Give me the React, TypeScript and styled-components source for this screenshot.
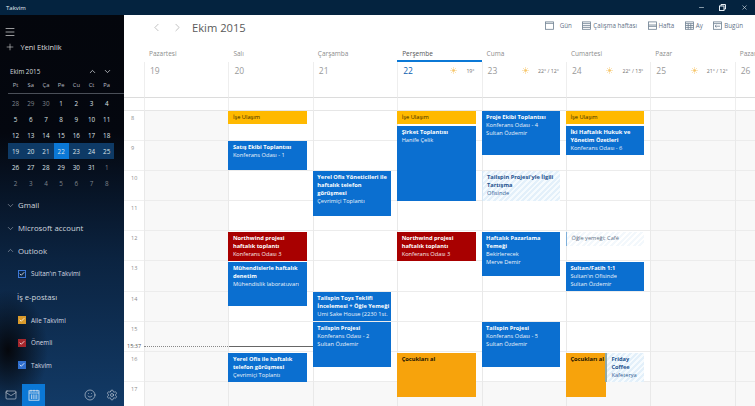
import React from "react";
import styled, { createGlobalStyle } from "styled-components";
import {
  Check,
  ChevronDown,
  ChevronLeft,
  ChevronRight,
  ChevronUp,
  Mail,
  Menu,
  Minus,
  Plus,
  Settings,
  Smile,
  Sun,
  X,
} from "lucide-react";

const HOUR = 30.2;
const DAY_START = 8;
const NOW_TOP = 235.5;

type Tone = "blue" | "red" | "yellow" | "orange" | "hatch" | "line";
type ToolKind = "day" | "work" | "week" | "month" | "today";

interface CalEvent {
  title: string;
  lines?: string[];
  start: number;
  hours: number;
  tone: Tone;
  half?: "left" | "right";
}

interface Day {
  name: string;
  num: string;
  weather?: string;
  today?: boolean;
  off?: boolean;
  narrow?: boolean;
  events: CalEvent[];
}

const days: Day[] = [
  { name: "Pazartesi", num: "19", off: true, events: [] },
  {
    name: "Salı",
    num: "20",
    events: [
      { title: "İşe Ulaşım", start: 8, hours: 0.48, tone: "yellow" },
      { title: "Satış Ekibi Toplantısı", lines: ["Konferans Odası - 1"], start: 9, hours: 1, tone: "blue" },
      { title: "Northwind projesi haftalık toplantı", lines: ["Konferans Odası 3"], start: 12, hours: 1, tone: "red" },
      { title: "Mühendislerle haftalık denetim", lines: ["Mühendislik laboratuvarı"], start: 13, hours: 1.5, tone: "blue" },
      { title: "Yerel Ofis ile haftalık telefon görüşmesi", lines: ["Çevrimiçi Toplantı"], start: 16, hours: 1, tone: "blue" },
    ],
  },
  {
    name: "Çarşamba",
    num: "21",
    events: [
      { title: "Yerel Ofis Yöneticileri ile haftalık telefon görüşmesi", lines: ["Çevrimiçi Toplantı"], start: 10, hours: 1.5, tone: "blue" },
      { title: "Tailspin Toys Teklifi İncelemesi + Öğle Yemeği", lines: ["Umi Sake House (2230 1st."], start: 14, hours: 1, tone: "blue" },
      { title: "Tailspin Projesi", lines: ["Konferans Odası - 2", "Sultan Özdemir"], start: 15, hours: 1.5, tone: "blue" },
    ],
  },
  {
    name: "Perşembe",
    num: "22",
    weather: "19°",
    today: true,
    events: [
      { title: "İşe Ulaşım", start: 8, hours: 0.48, tone: "yellow" },
      { title: "Şirket Toplantısı", lines: ["Hanife Çelik"], start: 8.5, hours: 2.5, tone: "blue" },
      { title: "Northwind projesi haftalık toplantı", lines: ["Konferans Odası 3"], start: 12, hours: 1, tone: "red" },
      { title: "Çocukları al", start: 16, hours: 1.5, tone: "orange" },
    ],
  },
  {
    name: "Cuma",
    num: "23",
    weather: "22° / 12°",
    events: [
      { title: "Proje Ekibi Toplantısı", lines: ["Konferans Odası - 4", "Sultan Özdemir"], start: 8, hours: 1.5, tone: "blue" },
      { title: "Tailspin Projesi'yle İlgili Tartışma", lines: ["Ofisinde"], start: 10, hours: 1, tone: "hatch" },
      { title: "Haftalık Pazarlama Yemeği", lines: ["Bekirlerecek", "Merve Demir"], start: 12, hours: 1.5, tone: "blue" },
      { title: "Tailspin Projesi", lines: ["Konferans Odası - 5", "Sultan Özdemir"], start: 15, hours: 1.5, tone: "blue" },
    ],
  },
  {
    name: "Cumartesi",
    num: "24",
    weather: "22° / 13°",
    events: [
      { title: "İşe Ulaşım", start: 8, hours: 0.48, tone: "yellow" },
      { title: "İki Haftalık Hukuk ve Yönetim Özetleri", lines: ["Konferans Odası - 6"], start: 8.5, hours: 1, tone: "blue" },
      { title: "Öğle yemeği; Café", start: 12, hours: 0.5, tone: "line" },
      { title: "Sultan/Fatih 1:1", lines: ["Sultan'ın Ofisinde", "Sultan Özdemir"], start: 13, hours: 1, tone: "blue" },
      { title: "Çocukları al", start: 16, hours: 1.5, tone: "orange", half: "left" },
      { title: "Friday Coffee", lines: ["Kafeterya"], start: 16, hours: 1, tone: "hatch", half: "right" },
    ],
  },
  { name: "Pazar", num: "25", weather: "21° / 12°", off: true, events: [] },
  { name: "Pazartesi", num: "26", off: true, narrow: true, events: [] },
];

const hours = [8, 9, 10, 11, 12, 13, 14, 15, 16, 17];

const miniWeeks = [
  ["28", "29", "30", "1", "2", "3", "4"],
  ["5", "6", "7", "8", "9", "10", "11"],
  ["12", "13", "14", "15", "16", "17", "18"],
  ["19", "20", "21", "22", "23", "24", "25"],
  ["26", "27", "28", "29", "30", "31", "1"],
  ["2", "3", "4", "5", "6", "7", "8"],
];

const miniHead = ["Pt", "Sa", "Ça", "Pe", "Cu", "Ct", "Pa"];

const tools: { kind: ToolKind; label: string }[] = [
  { kind: "day", label: "Gün" },
  { kind: "work", label: "Çalışma haftası" },
  { kind: "week", label: "Hafta" },
  { kind: "month", label: "Ay" },
  { kind: "today", label: "Bugün" },
];

const GlobalStyle = createGlobalStyle`
  html, body {
    margin: 0;
    padding: 0;
    height: 406px;
    overflow: hidden;
    background: #fff;
    font-family: "Open Sans", "Noto Sans", sans-serif;
  }
  * { box-sizing: border-box; }
`;

const Window = styled.div`
  width: 755px;
  height: 406px;
  display: flex;
  flex-direction: column;
  overflow: hidden;
`;

const TitleBar = styled.div`
  height: 15px;
  flex: none;
  display: flex;
  align-items: center;
  justify-content: space-between;
  background: #04233f;
  color: #e6edf3;
  font-size: 6px;
  padding: 0 7.5px 0 6px;
`;

const WinButtons = styled.div`
  display: flex;
  gap: 14.5px;
  align-items: center;
`;

const Body = styled.div`
  flex: 1;
  display: flex;
  min-height: 0;
`;

const Sidebar = styled.aside`
  width: 124px;
  flex: none;
  display: flex;
  flex-direction: column;
  color: #fff;
  background:
    radial-gradient(ellipse 40px 60px at 8px 335px, #05070c 0%, rgba(5, 7, 12, 0) 100%),
    linear-gradient(180deg, #04060c 0%, #04070f 30%, #0b2340 62%, #123a66 100%);
`;

const Burger = styled.div`
  height: 22px;
  padding: 6px 0 0 4px;
`;

const NewEvent = styled.div`
  display: flex;
  align-items: center;
  gap: 6px;
  height: 20px;
  padding-left: 4.5px;
  font-size: 7.4px;
  color: #dedede;
`;

const MiniTop = styled.div`
  display: flex;
  align-items: center;
  justify-content: space-between;
  margin-top: 6px;
  padding: 0 12.5px 0 10px;
  height: 16px;
  font-size: 6.3px;
  color: #d3d7dc;
`;

const MiniArrows = styled.div`
  display: flex;
  gap: 6px;
`;

const MiniHead = styled.div`
  display: grid;
  grid-template-columns: repeat(7, 15.2px);
  margin: 0 0 0 8px;
  padding-bottom: 2px;
  height: 15px;
  align-items: center;
  border-bottom: 1px solid #4a4f58;
  font-size: 5.8px;
  color: #b9bdc3;
  text-align: center;
`;

const MiniGrid = styled.div`
  display: grid;
  grid-template-columns: repeat(7, 15.2px);
  grid-auto-rows: 16px;
  margin-left: 8px;
  margin-top: 1px;
  font-size: 6.3px;
  text-align: center;
`;

const MiniCell = styled.div<{ $dim?: boolean; $week?: boolean; $today?: boolean }>`
  display: flex;
  align-items: center;
  justify-content: center;
  color: ${(p) => (p.$dim ? "#7f848c" : "#dfe2e6")};
  background: ${(p) => (p.$today ? "#0b78d6" : p.$week ? "#0e3a66" : "transparent")};
`;

const Section = styled.div<{ $top?: number }>`
  display: flex;
  align-items: center;
  gap: 3px;
  height: 22.8px;
  padding-left: 6px;
  margin-top: ${(p) => p.$top ?? 0}px;
  font-size: 7.8px;
  color: #d0d7df;
`;

const GroupTitle = styled.div`
  height: 24px;
  display: flex;
  align-items: center;
  padding-left: 17px;
  font-size: 7.7px;
  color: #d0d7df;
`;

const CalRow = styled.div`
  display: flex;
  align-items: center;
  gap: 5px;
  height: 22.6px;
  padding-left: 18px;
  font-size: 6.3px;
  color: #d3d9e0;
`;

const CheckBox = styled.span<{ $color: string; $fill?: boolean }>`
  width: 8px;
  height: 8px;
  flex: none;
  display: flex;
  align-items: center;
  justify-content: center;
  color: #fff;
  border: 1px solid ${(p) => p.$color};
  background: ${(p) => (p.$fill ? p.$color : "transparent")};
`;

const BottomBar = styled.div`
  margin-top: auto;
  height: 22px;
  display: flex;
  align-items: stretch;
  flex: none;
  padding-right: 1px;
`;

const BottomButton = styled.div<{ $active?: boolean }>`
  width: ${(p) => (p.$active ? "23px" : "22px")};
  display: flex;
  align-items: center;
  justify-content: center;
  color: #e6e9ee;
  background: ${(p) => (p.$active ? "#0b78d6" : "transparent")};
`;

const BottomSpacer = styled.div`
  flex: 1;
`;

const Main = styled.main`
  flex: 1;
  min-width: 0;
  display: flex;
  flex-direction: column;
  background: #fff;
`;

const TopBar = styled.div`
  height: 33px;
  flex: none;
  display: flex;
  align-items: flex-start;
  justify-content: space-between;
  padding: 5px 12px 0 26px;
`;

const Nav = styled.div`
  display: flex;
  align-items: center;
  gap: 8px;
  color: #9a9a9a;
`;

const MonthTitle = styled.div`
  font-size: 11.2px;
  color: #5a5a5a;
`;

const Tools = styled.div`
  display: flex;
  align-items: center;
  gap: 10.5px;
  height: 11px;
`;

const Tool = styled.div<{ $wide?: boolean }>`
  display: flex;
  align-items: center;
  gap: ${(p) => (p.$wide ? "6px" : "2px")};
  font-size: 6.2px;
  color: #5f7287;
`;

const Board = styled.div`
  flex: 1;
  min-height: 0;
  display: flex;
  overflow: hidden;
`;

const Times = styled.div`
  width: 20px;
  flex: none;
  position: relative;
`;

const TimesHead = styled.div`
  height: 50px;
  border-bottom: 1px solid #dcdcdc;
`;

const TimesGap = styled.div`
  height: 12.5px;
  border-bottom: 1px solid #e6e6e6;
`;

const TimeRow = styled.div`
  height: ${HOUR}px;
  padding: 3px 0 0 7px;
  font-size: 5.5px;
  color: #8a8a8a;
  border-bottom: 1px solid #f0f0f0;
`;

const NowLabel = styled.span`
  position: absolute;
  left: 3px;
  top: ${62.5 + NOW_TOP - 4}px;
  font-size: 5.5px;
  color: #555;
  background: #fff;
`;

const NowDots = styled.span`
  position: absolute;
  left: 20px;
  width: 84px;
  top: ${62.5 + NOW_TOP}px;
  border-top: 1px dotted #888;
  z-index: 1;
`;

const Column = styled.div<{ $narrow?: boolean }>`
  width: ${(p) => (p.$narrow ? "auto" : "84.4px")};
  flex: ${(p) => (p.$narrow ? "1" : "none")};
  display: flex;
  flex-direction: column;
  min-width: 0;
  overflow: hidden;
`;

const DayName = styled.div<{ $today?: boolean }>`
  height: 14px;
  flex: none;
  padding-left: 5px;
  font-size: 6.5px;
  line-height: 12px;
  white-space: nowrap;
  color: ${(p) => (p.$today ? "#555" : "#8c8c8c")};
  border-bottom: ${(p) => (p.$today ? "2px solid #0b78d6" : "none")};
`;

const DayHead = styled.div`
  height: 36px;
  flex: none;
  display: flex;
  align-items: flex-start;
  justify-content: space-between;
  padding: 2.5px 7px 0 5px;
  border-left: 1px solid #eee;
  border-bottom: 1px solid #dcdcdc;
`;

const DayNum = styled.span<{ $today?: boolean }>`
  font-size: 8.5px;
  color: ${(p) => (p.$today ? "#0b5fb0" : "#999")};
`;

const Weather = styled.span`
  display: flex;
  align-items: center;
  gap: 9px;
  padding-top: 2px;
  font-size: 5.2px;
  color: #6f6f6f;
  svg { color: #f6c66a; }
`;

const AllDayGap = styled.div`
  height: 12.5px;
  flex: none;
  border-left: 1px solid #eee;
  border-bottom: 1px solid #e6e6e6;
`;

const Track = styled.div`
  position: relative;
  flex: 1;
  border-left: 1px solid #e9e9e9;
`;

const Slot = styled.div<{ $off?: boolean }>`
  height: ${HOUR}px;
  border-bottom: 1px solid #ececec;
  background: ${(p) => (p.$off ? "#f8f8f8" : "#fff")};
`;

const NowLine = styled.div`
  position: absolute;
  left: 0;
  right: 0;
  top: ${NOW_TOP}px;
  border-top: 1px solid #666;
`;

const toneStyles: Record<Tone, string> = {
  blue: "background:#0b6fd0;color:#fff;",
  red: "background:#a80000;color:#fff;",
  yellow: "background:#ffb900;color:#3a2c00;",
  orange: "background:#f7a30c;color:#1c1300;",
  hatch:
    "background:repeating-linear-gradient(135deg,#e3f0fa 0,#e3f0fa 2px,#f6fbfe 2px,#f6fbfe 4px);color:#23538f;border-left:1px solid #d3e5f3;",
  line: "background:repeating-linear-gradient(135deg,#f3f8fc 0,#f3f8fc 2px,#fff 2px,#fff 4px);color:#5d6f85;border-left:1px solid #7fb0da;",
};

const EventBox = styled.div<{ $tone: Tone; $half?: "left" | "right" }>`
  position: absolute;
  left: ${(p) => (p.$half === "right" ? "38px" : "-1px")};
  right: ${(p) => (p.$half === "left" ? "44.5px" : "6px")};
  padding: 2px 1px 0 4.5px;
  overflow: hidden;
  font-size: 5.7px;
  line-height: 8px;
  ${(p) => toneStyles[p.$tone]}
  ${(p) => (p.$half === "right" ? "border-left:2px solid #8fa9a8;" : "")}
`;

const EventTitle = styled.div<{ $plain?: boolean }>`
  font-weight: ${(p) => (p.$plain ? 400 : 700)};
`;

const EventLine = styled.div`
  white-space: nowrap;
  opacity: 0.92;
`;

const ToolIcon = ({ kind }: { kind: ToolKind }) => (
  <svg width="9" height="9" viewBox="0 0 9 9" fill="none" stroke="#6d7f90" strokeWidth="0.8">
    <rect x="0.5" y="0.9" width="8" height="7.4" />
    {kind === "day" && <path d="M0.5 2.4H8.5" />}
    {kind === "work" && <path d="M0.5 2.6H8.5M0.5 4.6H8.5M0.5 6.4H8.5" />}
    {kind === "week" && <path d="M0.5 4H8.5M0.5 5.4H8.5" />}
    {kind === "month" && <path d="M0.5 2.6H8.5M0.5 4.5H8.5M0.5 6.4H8.5M3.2 2.6V8.3M5.8 2.6V8.3" />}
    {kind === "today" && <path d="M0.5 2.6H8.5M2 5.2H7M2 5.2L3.4 4M2 5.2L3.4 6.4" />}
  </svg>
);

const RestoreIcon = () => (
  <svg width="7" height="7" viewBox="0 0 7 7" fill="none" stroke="#e6edf3" strokeWidth="1">
    <rect x="0.5" y="2" width="4.5" height="4.5" />
    <path d="M2 2V0.5H6.5V5H5" />
  </svg>
);

const CalendarIcon = () => (
  <svg width="12" height="12" viewBox="0 0 12 12" fill="none" stroke="#e6e9ee" strokeWidth="0.8">
    <rect x="1" y="1.8" width="10" height="9.4" />
    <path d="M1 4H11M3 0.8V2.6M6 0.8V2.6M9 0.8V2.6M3.4 5.4V10M5.2 5.4V10M7 5.4V10M8.8 5.4V10" />
  </svg>
);

const CalendarEvent = ({ event }: { event: CalEvent }) => (
  <EventBox
    $tone={event.tone}
    $half={event.half}
    style={{
      top: (event.start - DAY_START) * HOUR + 0.5,
      height: event.hours * HOUR - 1,
    }}
  >
    <EventTitle $plain={event.tone === "yellow" || event.tone === "line"}>
      {event.title}
    </EventTitle>
    {event.lines?.map((line) => (
      <EventLine key={line}>{line}</EventLine>
    ))}
  </EventBox>
);

const SidebarCheck = ({ color, fill }: { color: string; fill?: boolean }) => (
  <CheckBox $color={color} $fill={fill}>
    <Check size={6} strokeWidth={3} />
  </CheckBox>
);

const App = () => {
  return (
    <Window>
      <GlobalStyle />
      <TitleBar>
        <span>Takvim</span>
        <WinButtons>
          <Minus size={7} />
          <RestoreIcon />
          <X size={7} />
        </WinButtons>
      </TitleBar>
      <Body>
        <Sidebar>
          <Burger>
            <Menu size={12} strokeWidth={1.2} />
          </Burger>
          <NewEvent>
            <Plus size={10} strokeWidth={1.4} />
            Yeni Etkinlik
          </NewEvent>
          <MiniTop>
            <span>Ekim 2015</span>
            <MiniArrows>
              <ChevronUp size={9} />
              <ChevronDown size={9} />
            </MiniArrows>
          </MiniTop>
          <MiniHead>
            {miniHead.map((d) => (
              <span key={d}>{d}</span>
            ))}
          </MiniHead>
          <MiniGrid>
            {miniWeeks.map((week, w) =>
              week.map((d, i) => (
                <MiniCell
                  key={`${w}-${i}`}
                  $dim={(w === 0 && i < 3) || (w === 4 && i === 6) || w === 5}
                  $week={w === 3}
                  $today={w === 3 && i === 3}
                >
                  {d}
                </MiniCell>
              ))
            )}
          </MiniGrid>
          <Section $top={3}>
            <ChevronDown size={9} strokeWidth={1.2} />
            Gmail
          </Section>
          <Section>
            <ChevronDown size={9} strokeWidth={1.2} />
            Microsoft account
          </Section>
          <Section>
            <ChevronUp size={9} strokeWidth={1.2} />
            Outlook
          </Section>
          <CalRow>
            <SidebarCheck color="#3c78d8" />
            Sultan'ın Takvimi
          </CalRow>
          <GroupTitle>İş e-postası</GroupTitle>
          <CalRow>
            <SidebarCheck color="#d99a2b" fill />
            Aile Takvimi
          </CalRow>
          <CalRow>
            <SidebarCheck color="#a4262c" fill />
            Önemli
          </CalRow>
          <CalRow>
            <SidebarCheck color="#2f6fd0" fill />
            Takvim
          </CalRow>
          <BottomBar>
            <BottomButton>
              <Mail size={12} strokeWidth={1.1} />
            </BottomButton>
            <BottomButton $active>
              <CalendarIcon />
            </BottomButton>
            <BottomSpacer />
            <BottomButton>
              <Smile size={12} strokeWidth={1.1} />
            </BottomButton>
            <BottomButton>
              <Settings size={12} strokeWidth={1.1} />
            </BottomButton>
          </BottomBar>
        </Sidebar>
        <Main>
          <TopBar>
            <Nav>
              <ChevronLeft size={13} strokeWidth={1.1} />
              <ChevronRight size={13} strokeWidth={1.1} />
              <MonthTitle>Ekim 2015</MonthTitle>
            </Nav>
            <Tools>
              {tools.map((tool) => (
                <Tool key={tool.kind} $wide={tool.kind === "day"}>
                  <ToolIcon kind={tool.kind} />
                  {tool.label}
                </Tool>
              ))}
            </Tools>
          </TopBar>
          <Board>
            <Times>
              <TimesHead />
              <TimesGap />
              {hours.map((h) => (
                <TimeRow key={h}>{h}</TimeRow>
              ))}
              <NowLabel>15:37</NowLabel>
              <NowDots />
            </Times>
            {days.map((day) => (
              <Column key={`${day.name}${day.num}`} $narrow={day.narrow}>
                <DayName $today={day.today}>{day.name}</DayName>
                <DayHead>
                  <DayNum $today={day.today}>{day.num}</DayNum>
                  {day.weather && (
                    <Weather>
                      <Sun size={7} fill="#f6c66a" />
                      {day.weather}
                    </Weather>
                  )}
                </DayHead>
                <AllDayGap />
                <Track>
                  {hours.map((h) => (
                    <Slot key={h} $off={day.off || h === 17} />
                  ))}
                  {day.name === "Salı" && <NowLine />}
                  {day.events.map((event) => (
                    <CalendarEvent key={event.title + event.start} event={event} />
                  ))}
                </Track>
              </Column>
            ))}
          </Board>
        </Main>
      </Body>
    </Window>
  );
};

export default App;
